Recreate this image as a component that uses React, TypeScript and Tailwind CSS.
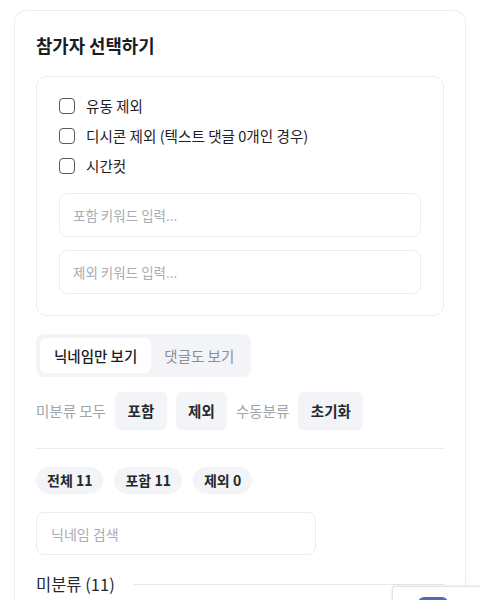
import { useState } from 'react'

const font = { fontFamily: '"Noto Sans CJK KR", "Noto Sans", sans-serif' }

function Check({ label }: { label: string }) {
  const [on, setOn] = useState(false)
  return (
    <label className="flex items-center gap-[11px] h-[30px] cursor-pointer">
      <span
        onClick={() => setOn(!on)}
        className={`w-[16px] h-[16px] rounded-[4px] border-[1.5px] border-[#55585e] ${on ? 'bg-[#55585e]' : 'bg-white'}`}
      />
      <span className="text-[14.6px] text-[#1f2125]">{label}</span>
    </label>
  )
}

export default function App() {
  const [tab, setTab] = useState(0)
  return (
    <div style={font} className="relative w-[480px] h-[600px] overflow-hidden bg-white pt-[10px] px-[14px]">
      <div className="border border-[#ededf0] rounded-[12px] px-[21px] pt-[20px] pb-6">
        <h2 className="text-[17.8px] font-bold text-[#1b1c1f] leading-[28px]">참가자 선택하기</h2>

        <div className="mt-[17px] border border-[#ededf0] rounded-[10px] px-[22px] pt-[14px] pb-[21px]">
          <Check label="유동 제외" />
          <Check label="디시콘 제외 (텍스트 댓글 0개인 경우)" />
          <Check label="시간컷" />
          <input
            placeholder="포함 키워드 입력..."
            className="mt-[12px] w-full h-[44px] rounded-[8px] border border-[#ededf0] px-[13px] text-[13.5px] outline-none placeholder:text-[#a9acb2]"
          />
          <input
            placeholder="제외 키워드 입력..."
            className="mt-[13px] w-full h-[44px] rounded-[8px] border border-[#ededf0] px-[13px] text-[13.5px] outline-none placeholder:text-[#a9acb2]"
          />
        </div>

        <div className="mt-[18px] inline-flex p-[4px] bg-[#f2f4f7] rounded-[8px]">
          {['닉네임만 보기', '댓글도 보기'].map((t, i) => (
            <button
              key={t}
              onClick={() => setTab(i)}
              className={`h-[35px] px-[13px] rounded-[6px] text-[14.5px] ${tab === i ? 'bg-white font-medium text-[#1b1c1f] px-[14px]' : 'text-[#8b8f96]'}`}
            >
              {t}
            </button>
          ))}
        </div>

        <div className="mt-[15px] flex items-center gap-[9px] h-[38px]">
          <span className="text-[14.5px] text-[#a0a3a9]">미분류 모두</span>
          <button className="h-[38px] w-[52px] rounded-[6px] bg-[#f2f4f7] text-[14.5px] font-bold text-[#26282c]">포함</button>
          <button className="h-[38px] w-[51px] rounded-[6px] bg-[#f2f4f7] text-[14.5px] font-bold text-[#26282c]">제외</button>
          <span className="text-[14.5px] text-[#a0a3a9]">수동분류</span>
          <button className="h-[38px] w-[65px] rounded-[6px] bg-[#f2f4f7] text-[14.5px] font-bold text-[#26282c]">초기화</button>
        </div>

        <div className="mt-[18px] border-t border-[#ededf0]" />

        <div className="mt-[18px] flex gap-[11px]">
          {['전체 11', '포함 11', '제외 0'].map((t) => (
            <span key={t} className="h-[27px] px-[11px] flex items-center rounded-full bg-[#f2f4f7] text-[14px] font-bold text-[#26282c]">
              {t}
            </span>
          ))}
        </div>

        <input
          placeholder="닉네임 검색"
          className="mt-[18px] w-[280px] h-[43px] rounded-[8px] border border-[#ededf0] px-[14px] text-[14px] outline-none placeholder:text-[#a9acb2]"
        />

        <div className="mt-[17px] flex items-center gap-[19px]">
          <span className="text-[16.5px] text-[#26282c]">미분류 (11)</span>
          <div className="flex-1 border-t border-[#e6e7ea]" />
        </div>
      </div>

      <div className="absolute left-[392px] top-[586px] w-[100px] h-[40px] bg-white border border-[#e3e4e7] rounded-tl-[3px] shadow-[0_0_3px_rgba(0,0,0,0.12)]">
        <div className="ml-[25px] mt-[10px] w-[30px] h-[10px] rounded-t-[6px] bg-[#4a6fb5]" />
      </div>
    </div>
  )
}
